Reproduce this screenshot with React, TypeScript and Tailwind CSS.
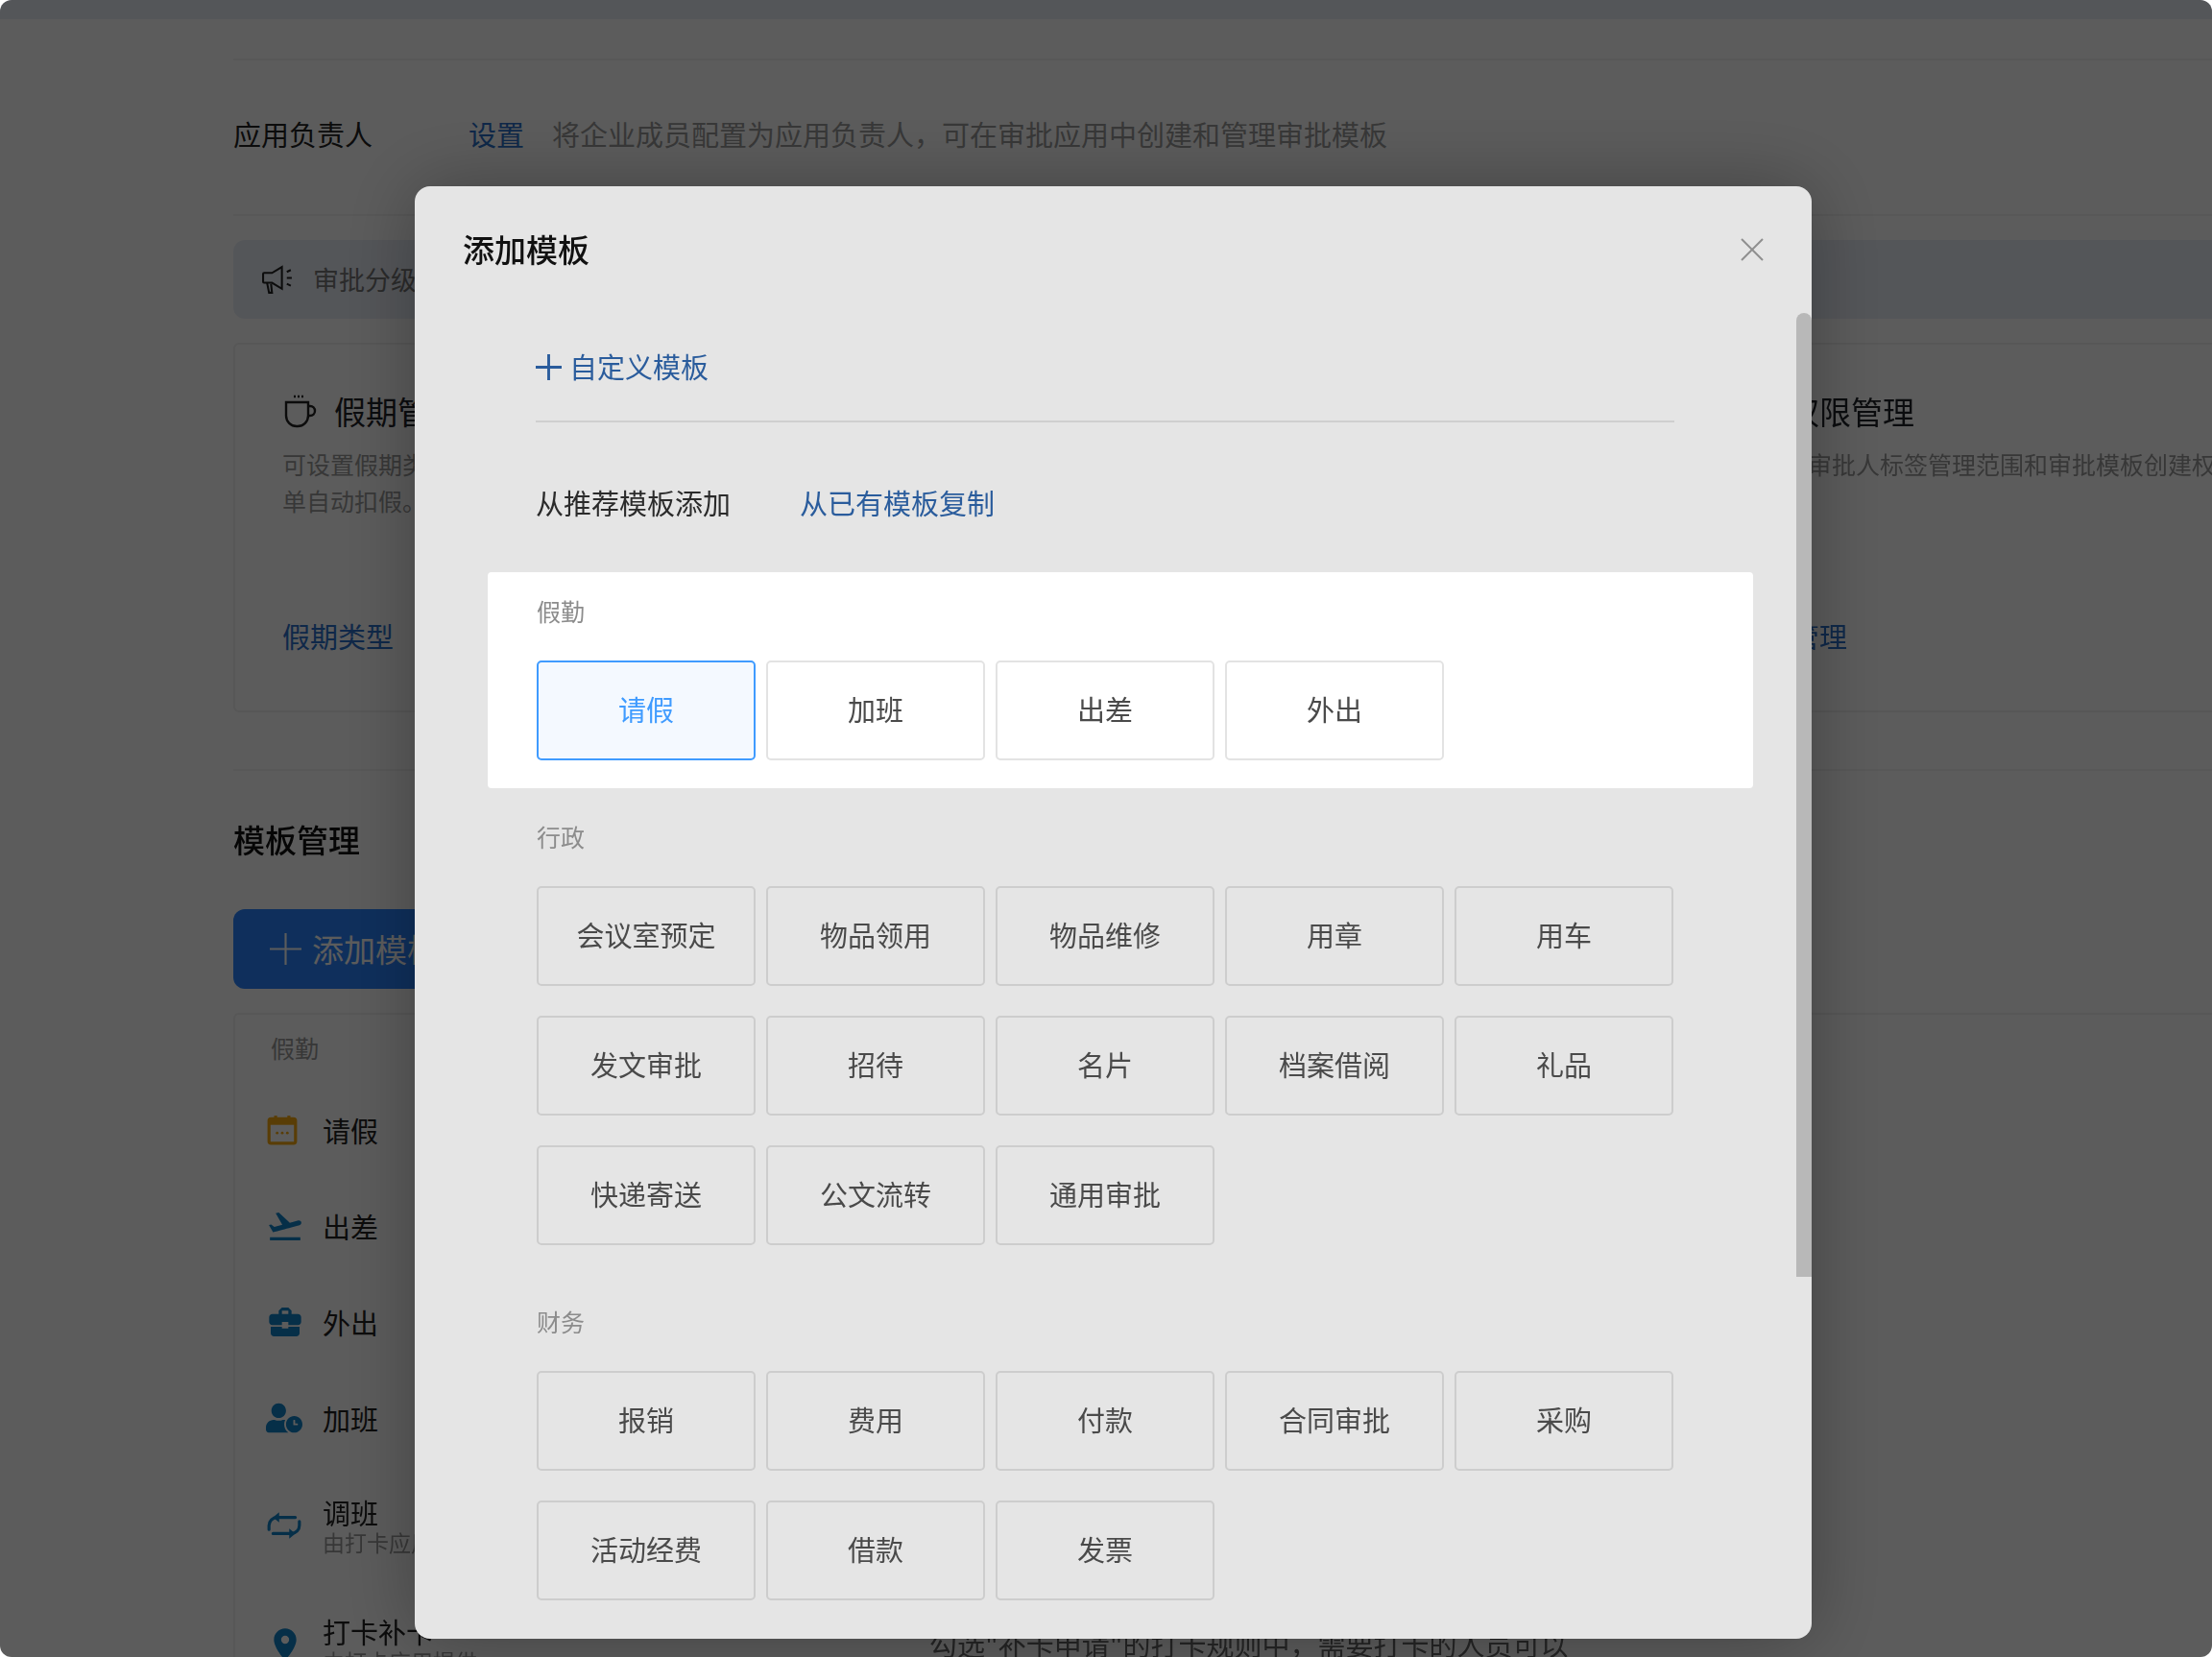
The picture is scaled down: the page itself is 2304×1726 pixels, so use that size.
import { FaUserClock } from "react-icons/fa";
import { MdBusinessCenter, MdFlightTakeoff, MdLocationOn } from "react-icons/md";

const groups = [
  { title: "假勤", items: ["请假", "加班", "出差", "外出"], active: true },
  {
    title: "行政",
    items: ["会议室预定", "物品领用", "物品维修", "用章", "用车", "发文审批", "招待", "名片", "档案借阅", "礼品", "快递寄送", "公文流转", "通用审批"],
  },
  { title: "财务", items: ["报销", "费用", "付款", "合同审批", "采购", "活动经费", "借款", "发票"] },
];

const PlusIcon = ({ size, weight }: { size: string; weight: number }) => (
  <svg viewBox="0 0 28 28" className={size} fill="none" stroke="currentColor" strokeWidth={weight}>
    <path d="M14 0v28M0 14h28" />
  </svg>
);

const CalendarIcon = () => (
  <svg viewBox="0 0 32 32" className="w-[34px] h-[34px]" fill="none">
    <rect x="3" y="5" width="26" height="24" rx="2" stroke="#f5a911" strokeWidth="3" />
    <rect x="3" y="5" width="26" height="6" fill="#f5a911" />
    <rect x="8" y="2" width="3" height="6" fill="#f5a911" />
    <rect x="21" y="2" width="3" height="6" fill="#f5a911" />
    <circle cx="11" cy="19" r="1.3" fill="#f5a911" />
    <circle cx="16" cy="19" r="1.3" fill="#f5a911" />
    <circle cx="21" cy="19" r="1.3" fill="#f5a911" />
  </svg>
);

const SwapIcon = () => (
  <svg viewBox="0 0 36 32" className="w-[38px] h-[34px]" fill="none" stroke="#1282c8" strokeWidth="3" strokeLinecap="round">
    <path d="M3 20v-4a8 8 0 0 1 8-8h18" />
    <path d="M33 12v4a8 8 0 0 1-8 8H7" />
    <polygon points="13,3 7,8 13,13" fill="#1282c8" stroke="none" />
    <polygon points="23,19 29,24 23,29" fill="#1282c8" stroke="none" />
  </svg>
);

const HornIcon = () => (
  <svg viewBox="0 0 34 30" className="w-[35px] h-[31px] text-[#222]" fill="none" stroke="currentColor" strokeWidth="2">
    <path d="M3 8h8l10-6v22l-10-6H3a1 1 0 0 1-1-1V9a1 1 0 0 1 1-1z" />
    <path d="M6 18l2 10h3l-1-9" />
    <path d="M26 7l4-2M26 13h5M26 19l4 2" />
  </svg>
);

const CupIcon = () => (
  <svg viewBox="0 0 36 36" className="w-[36px] h-[36px] text-[#222]" fill="none" stroke="currentColor" strokeWidth="2.4">
    <path d="M12 2h2M16 2h2M20 2h2" />
    <path d="M4 8h23v14a11 11 0 0 1-11 11h-1A11 11 0 0 1 4 22z" />
    <path d="M27 12h2a5 5 0 0 1 0 10h-2" />
  </svg>
);

const rows = [
  { name: "请假", icon: <CalendarIcon /> },
  { name: "出差", icon: <MdFlightTakeoff className="w-[40px] h-[40px] text-[#1282c8]" /> },
  { name: "外出", icon: <MdBusinessCenter className="w-[40px] h-[40px] text-[#1282c8]" /> },
  { name: "加班", icon: <FaUserClock className="w-[38px] h-[34px] text-[#1282c8]" /> },
  { name: "调班", sub: "由打卡应用提供", icon: <SwapIcon /> },
  {
    name: "打卡补卡",
    sub: "由打卡应用提供",
    note: '勾选"补卡申请"的打卡规则中\uFF0C需要打卡的人员可以',
    icon: <MdLocationOn className="w-[40px] h-[40px] text-[#1282c8]" />,
  },
];

const InfoCard = ({ title, desc, link, icon }: { title: string; desc: string[]; link: string; icon: React.ReactNode }) => (
  <div className="w-[733px] shrink-0 h-[385px] border-2 border-[#f0f0f0] rounded-md pl-[49px] pt-[48px]">
    <div className="flex items-center gap-[18px] h-[44px] text-[33px] text-[#1f2329]">
      {icon}
      <span>{title}</span>
    </div>
    <div className="mt-[13px] h-[76px] text-[25px] leading-[38px] text-[#9a9a9a] whitespace-nowrap">
      {desc.map((line) => (
        <p key={line}>{line}</p>
      ))}
    </div>
    <div className="mt-[101px] text-[29px] text-[#2a6fc9]">{link}</div>
  </div>
);

const Page = () => (
  <div className="h-full w-full bg-white blur-[0.6px]">
    <div className="h-[20px] bg-[#e9eef7]" />
    <div className="pl-[243px]">
      <div className="mt-[41px] border-t-2 border-[#f3f3f3] h-[162px] flex items-center text-[29px] leading-none pb-[8px]">
        <span className="w-[245px] text-[#222]">应用负责人</span>
        <span className="w-[87px] text-[#2a6fc9]">设置</span>
        <span className="text-[#9a9a9a]">{"将企业成员配置为应用负责人\uFF0C可在审批应用中创建和管理审批模板"}</span>
      </div>
      <div className="border-t-2 border-[#f3f3f3] pt-[25px]">
        <div className="h-[82px] bg-[#e9eef7] rounded-l-xl flex items-center pl-[29px] gap-[19px] text-[27px] text-[#777]">
          <HornIcon />
          <span>审批分级管理</span>
        </div>
      </div>
      <div className="flex gap-[24px] mt-[25px] pb-[59px] border-b-2 border-[#f3f3f3]">
        <InfoCard title="假期管理" desc={["可设置假期类型和余额规则\uFF0C员工请假", "单自动扣假。"]} link="假期类型" icon={<CupIcon />} />
        <InfoCard title="审批规则" desc={["可设置审批流程和审批人规则"]} link="审批规则" icon={<CupIcon />} />
        <InfoCard title="权限管理" desc={["可设置审批人标签管理范围和审批模板创建权限"]} link="权限管理" icon={<CupIcon />} />
      </div>
      <h2 className="mt-[48px] text-[33px] leading-[46px] font-medium text-[#111]">模板管理</h2>
      <button className="mt-[50px] w-[260px] h-[83px] rounded-l-xl bg-[#2a84ff] text-white text-[33px] flex items-center pl-[38px] gap-[11px]">
        <PlusIcon size="w-[33px] h-[33px]" weight={1.8} />
        添加模板
      </button>
      <div className="mt-[25px] border-t-2 border-l-2 border-[#f0f0f0] rounded-tl-md">
        <div className="pl-[37px] pt-[17px] text-[25px] leading-[34px] text-[#9a9a9a]">假勤</div>
        <div className="pl-[32px] pt-[19px] flex flex-col">
          {rows.map((row) => (
            <div key={row.name} className={`flex items-center ${row.sub ? "h-[124px]" : "h-[100px]"}`}>
              <span className="w-[59px] flex justify-start">{row.icon}</span>
              <div className="w-[632px] flex flex-col">
                <span className="text-[29px] leading-[34px] text-[#222]">{row.name}</span>
                {row.sub && <span className="text-[23px] leading-[28px] text-[#9a9a9a]">{row.sub}</span>}
              </div>
              {row.note && <span className="text-[29px] text-[#666]">{row.note}</span>}
            </div>
          ))}
        </div>
      </div>
    </div>
  </div>
);

const Modal = () => (
  <div className="absolute left-[432px] top-[194px] w-[1455px] h-[1513px] bg-[#e5e5e5] rounded-[16px] overflow-hidden blur-[0.5px] shadow-[0_0_80px_rgba(0,0,0,0.3)]">
    <div className="h-[132px] pl-[50px] pr-[50px] flex items-center justify-between">
      <span className="text-[33px] font-medium text-[#111]">添加模板</span>
      <svg viewBox="0 0 24 24" className="w-[24px] h-[24px] text-[#8f8f8f]" fill="none" stroke="currentColor" strokeWidth="2">
        <path d="M1 1l22 22M23 1L1 23" />
      </svg>
    </div>
    <div className="absolute right-0 top-[132px] w-[16px] h-[1004px] bg-[#b8b8b8] rounded-t-lg" />
    <div className="pl-[126px] pr-[143px]">
      <div className="h-[114px] border-b-2 border-[#cfcfcf] flex items-center gap-[8px] text-[29px] text-[#2a5c9c]">
        <PlusIcon size="w-[27px] h-[27px]" weight={3} />
        <span>自定义模板</span>
      </div>
      <div className="h-[156px] pt-[12px] flex items-center text-[29px] gap-[72px]">
        <span className="text-[#2b2b2b]">从推荐模板添加</span>
        <span className="text-[#2a5c9c]">从已有模板复制</span>
      </div>
    </div>
    <div className="ml-[76px] w-[1318px]">
      {groups.map((group) => (
        <section
          key={group.title}
          className={`pl-[51px] pr-[55px] rounded ${group.active ? "bg-white h-[225px] pt-[23px]" : "pt-[33px] pb-[29px]"}`}
        >
          <h3 className="text-[25px] leading-[34px] text-[#8c8c8c]">{group.title}</h3>
          <div className="mt-[35px] grid grid-cols-[repeat(5,228px)] gap-x-[11px] gap-y-[31px]">
            {group.items.map((item, i) => {
              const selected = group.active && i === 0;
              return (
                <div
                  key={item}
                  className={`h-[104px] pb-[2px] rounded-[5px] border-2 flex items-center justify-center text-[29px] ${
                    selected
                      ? "border-[#3f9bff] bg-[#f4f9ff] text-[#3f9bff]"
                      : group.active
                        ? "border-[#e3e3e3] text-[#4a4a4a]"
                        : "border-[#cdcdcd] text-[#4a4a4a]"
                  }`}
                >
                  {item}
                </div>
              );
            })}
          </div>
        </section>
      ))}
    </div>
  </div>
);

export default function App() {
  return (
    <div
      className="relative w-[2304px] h-[1726px] overflow-hidden rounded-[12px]"
      style={{ fontFamily: '"Noto Sans CJK SC", "Noto Sans", sans-serif' }}
    >
      <Page />
      <div className="absolute inset-0 bg-black/64" />
      <Modal />
    </div>
  );
}
